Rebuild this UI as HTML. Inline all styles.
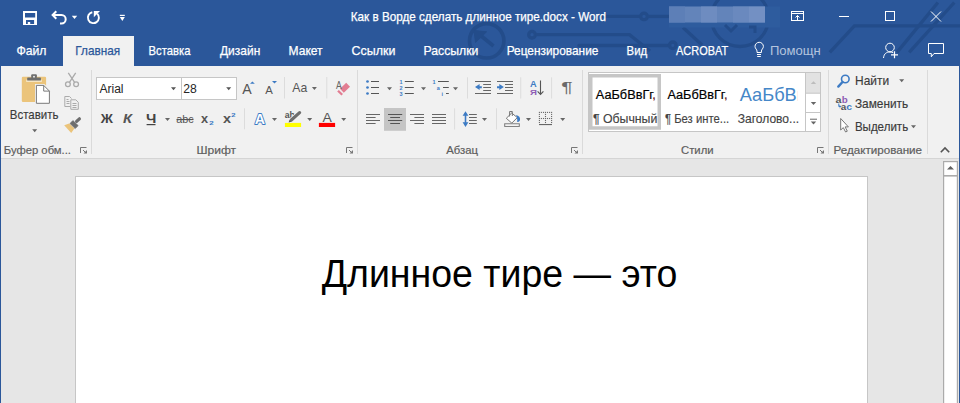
<!DOCTYPE html>
<html><head><meta charset="utf-8"><style>
html,body{margin:0;padding:0;width:960px;height:403px;overflow:hidden;background:#E6E6E6;}
svg{display:block;}
</style></head><body>
<svg width="960" height="403" viewBox="0 0 960 403">
<rect x="0" y="0" width="960" height="66" fill="#2B579A"/>
<g stroke="#234C8A" stroke-width="3.3" fill="none" stroke-linecap="butt">
<circle cx="486.7" cy="40.8" r="17.2" stroke-width="3.6"/>
<path d="M493.5 46 L480 35" stroke-width="3.6"/>
<path d="M474 30.5 L486.5 31.8 L475.5 42.5 Z" fill="#234C8A" stroke-width="1" stroke-linejoin="round"/>
<circle cx="532" cy="34.7" r="3.3"/>
<path d="M535.3 34.7 H629.5 L650 51"/>
<path d="M579 45.5 H669.5" stroke-linecap="round"/>
<circle cx="672.8" cy="45.3" r="3.3"/>
<path d="M600 16.4 H640.7"/><circle cx="644" cy="16.4" r="3.3"/><path d="M647.3 16.4 H670"/>
<circle cx="740" cy="18" r="28.5"/>
<path d="M683 27.5 L702 45"/>
<path d="M829.8 52.4 L854.4 25.9 H960"/>
<path d="M897 52.4 L937.9 2.5 M909.2 52.4 L954.3 2.5"/>
</g>
<rect x="669" y="6.5" width="111" height="21" fill="#2E5C9E"/>
<rect x="669" y="6.5" width="96" height="16" fill="#6384BA"/>
<rect x="669" y="6.5" width="16" height="16" fill="#5D7FB7"/><rect x="701" y="6.5" width="16" height="16" fill="#6E8CC0"/><rect x="733" y="6.5" width="16" height="16" fill="#6A89BE"/><rect x="749" y="6.5" width="16" height="16" fill="#7390C3"/>
<path d="M725 25 L731 31 L737 25 M749 27 H755 V33" fill="none" stroke="#234C8A" stroke-width="3"/>
<g fill="none" stroke="#FFFFFF">
<path d="M53 15 H61.5 A4.2 4.2 0 0 1 61.5 23.4 H60" stroke-width="2"/>
<path d="M56.3 11.3 L52.6 15 L56.3 18.7" stroke-width="2"/>
<path d="M92.3 12.2 A5.5 5.5 0 1 0 97.2 13.6" stroke-width="1.9"/>
</g>
<g fill="#FFFFFF">
<path d="M23 11 H37 V25 H23 Z M25 13 V17.6 H35.2 V13 Z M26 20 V24 H27.8 V22 H30.2 V24 H34.1 V20 Z" fill-rule="evenodd"/>
<path d="M71.8 15.8 H77.2 L74.5 18.9 Z"/>
<path d="M93.8 11 H100 L93.8 17.2 Z"/>
<rect x="119.8" y="14.8" width="5" height="1.2"/>
<path d="M119.8 17 H124.8 L122.3 21 Z"/>
</g>
<g fill="none" stroke="#FFFFFF" stroke-width="1">
<rect x="791.5" y="11.5" width="12" height="9"/>
<path d="M791.5 13.5 H803.5 M797.5 20.5 V15.5 M795.5 17.5 L797.5 15.5 L799.5 17.5"/>
<path d="M839 16.5 H849"/>
<rect x="885.5" y="11.5" width="9" height="9"/>
<path d="M931 11.5 L941 21.5 M941 11.5 L931 21.5"/>
</g>
<g fill="none" stroke="#FFFFFF" stroke-width="1">
<path d="M757 54.5 H761 M757.2 56.5 H760.8" stroke="#fff"/>
<path d="M757 52.5 V51 C757 49.5 755 48.5 755 46.5 A4.2 4.2 0 0 1 763.4 46.5 C763.4 48.5 761.4 49.5 761.4 51 V52.5 Z"/>
<circle cx="890" cy="47.5" r="4.3"/>
<path d="M883.5 58 C884 53.5 886.5 52 890 52 C891.5 52 892.5 52.3 893.2 52.7"/>
<path d="M891 54.8 H898 M894.5 51.3 V58.3" stroke-width="1.2"/>
<path d="M928.5 43.5 H943.5 V53.5 H934 L931.3 56.8 V53.5 H928.5 Z"/>
</g>
<rect x="63" y="36" width="71" height="30" fill="#F1F1F1"/>
<rect x="1" y="66" width="958" height="92" fill="#F1F1F1"/>
<rect x="1" y="158" width="958" height="1" fill="#D5D5D5"/>
<rect x="0" y="159" width="960" height="244" fill="#E6E6E6"/>
<rect x="0" y="66" width="1" height="337" fill="#2B579A"/>
<rect x="959" y="66" width="1" height="337" fill="#2B579A"/>
<rect x="91.0" y="70" width="1" height="84" fill="#DADADA"/>
<rect x="357.0" y="70" width="1" height="84" fill="#DADADA"/>
<rect x="582.0" y="70" width="1" height="84" fill="#DADADA"/>
<rect x="828.0" y="70" width="1" height="84" fill="#DADADA"/>
<rect x="927.0" y="70" width="1" height="84" fill="#DADADA"/>
<g fill="none" stroke="#777" stroke-width="1"><path d="M80.5 153 V147.5 H86.5"/><path d="M83 150 L86 153"/></g><path d="M83.5 153.5 H87 V150 Z" fill="#777"/>
<g fill="none" stroke="#777" stroke-width="1"><path d="M346.5 153 V147.5 H352.5"/><path d="M349 150 L352 153"/></g><path d="M349.5 153.5 H353 V150 Z" fill="#777"/>
<g fill="none" stroke="#777" stroke-width="1"><path d="M571.5 153 V147.5 H577.5"/><path d="M574 150 L577 153"/></g><path d="M574.5 153.5 H578 V150 Z" fill="#777"/>
<g fill="none" stroke="#777" stroke-width="1"><path d="M817.5 153 V147.5 H823.5"/><path d="M820 150 L823 153"/></g><path d="M820.5 153.5 H824 V150 Z" fill="#777"/>
<path d="M940.8 152.3 L945 148 L949.2 152.3" fill="none" stroke="#555" stroke-width="1.6"/>
<rect x="21.8" y="76.8" width="24.3" height="25.1" rx="1.2" fill="#EBC47B"/>
<rect x="26.2" y="79.6" width="15.7" height="2.4" fill="#F5E5C2"/>
<rect x="27.2" y="77.4" width="13.7" height="3.2" rx="0.6" fill="#6E6E6E"/>
<rect x="31.2" y="74.2" width="5.7" height="4" rx="1" fill="#6E6E6E"/>
<rect x="33.1" y="75.9" width="1.8" height="1.6" fill="#E8E8E8"/>
<path d="M35 84 H44.3 L50.8 90.5 V104.8 H35 Z" fill="#F1F1F1"/>
<path d="M36.4 85.4 H43.7 L49.4 91.1 V103.3 H36.4 Z" fill="#fff" stroke="#7A7A7A" stroke-width="1"/>
<path d="M43.7 85.4 V91.1 H49.4" fill="none" stroke="#7A7A7A" stroke-width="1"/>
<path d="M32.2 129.2 H37.2 L34.7 132.2 Z" fill="#666"/>
<g fill="none" stroke="#ABABAB" stroke-width="1.3">
<path d="M68.3 72.8 L74.6 82.3 M75.7 72.8 L69.4 82.3"/>
<circle cx="67.9" cy="84.2" r="2.4"/><circle cx="76.1" cy="84.2" r="2.4"/></g>
<g fill="none" stroke="#ABABAB" stroke-width="1">
<path d="M70.3 106.5 H64.8 V96.5 H69.5 L71.5 98.5"/>
<path d="M66.5 99.5 H68.5 M66.5 101.5 H69.5 M66.5 103.5 H69.5"/>
<path d="M70.8 99.8 H75.8 L78.3 102.3 V109.3 H70.8 Z" fill="#F1F1F1"/>
<path d="M72.5 103.5 H76.5 M72.5 105.5 H76.5 M72.5 107.5 H76.5"/></g>
<path d="M76.6 121.4 L79.4 118.8" stroke="#6E6E6E" stroke-width="3.2" stroke-linecap="round"/>
<path d="M72.9 120.6 L78.1 125.6 L75.2 128.6 L70 123.6 Z" fill="#6E6E6E" stroke="#6E6E6E" stroke-width="0.8" stroke-linejoin="round"/>
<path d="M64.2 125.2 L69.2 123.4 L74.4 128.6 L71.2 133 Z" fill="#EBC47B"/>
<rect x="96.5" y="77.5" width="140" height="22" fill="#fff" stroke="#C6C6C6"/>
<path d="M181.5 77.5 V99.5" stroke="#C6C6C6"/>
<path d="M171 87.3 H176 L173.5 90.3 Z" fill="#555"/>
<path d="M226.2 87.3 H231.2 L228.7 90.3 Z" fill="#555"/>
<path d="M250 83.7 L252.4 81.4 L254.8 83.7 Z" fill="#3D7BC4"/><path d="M272 81 H277 L274.5 83.6 Z" fill="#3D7BC4"/>
<rect x="284" y="77" width="1" height="21.5" fill="#DCDCDC"/><rect x="326.3" y="77" width="1" height="21.5" fill="#DCDCDC"/>
<path d="M311.9 86.9 H316.9 L314.4 89.9 Z" fill="#666"/>
<path d="M340 88.8 L346.2 82.8 L350 86.8 L343.8 92.8 Z" fill="#E27D92"/><path d="M337.2 91.5 L338.8 90 L343 94 L341.4 95.6 Z" fill="#E27D92"/>
<path d="M165 118 H170 L167.5 121 Z" fill="#666"/>
<rect x="146.6" y="124" width="8.9" height="1.2" fill="#444"/>
<rect x="176.5" y="119" width="17" height="1.1" fill="#555"/>
<rect x="244" y="108.3" width="1" height="21" fill="#DCDCDC"/>
<path d="M272 118 H277 L274.5 121 Z" fill="#666"/>
<path d="M307.2 118 H312.2 L309.7 121 Z" fill="#666"/>
<path d="M341.2 118 H346.2 L343.7 121 Z" fill="#666"/>
<rect x="284.9" y="122.9" width="16.2" height="4.1" fill="#FFFF00"/>
<rect x="318.9" y="122.9" width="16.2" height="4.1" fill="#FF0000"/>
<circle cx="367.5" cy="81.5" r="1.35" fill="#3D7BC4"/><rect x="371" y="81.0" width="8" height="1" fill="#555"/>
<rect x="404.8" y="81.0" width="9" height="1" fill="#555"/>
<circle cx="367.5" cy="87.5" r="1.35" fill="#3D7BC4"/><rect x="371" y="87.0" width="8" height="1" fill="#555"/>
<rect x="404.8" y="87.0" width="9" height="1" fill="#555"/>
<circle cx="367.5" cy="93.5" r="1.35" fill="#3D7BC4"/><rect x="371" y="93.0" width="8" height="1" fill="#555"/>
<rect x="404.8" y="93.0" width="9" height="1" fill="#555"/>
<path d="M387 87.2 H392 L389.5 90.2 Z" fill="#666"/>
<path d="M421 87.2 H426 L423.5 90.2 Z" fill="#666"/>
<path d="M453 87.2 H458 L455.5 90.2 Z" fill="#666"/>
<g font-family="Liberation Sans" font-weight="bold" font-size="5.5" fill="#3D7BC4"><text x="399.6" y="83.6">1</text><text x="399.6" y="89.6">2</text><text x="399.6" y="95.6">3</text><text x="432.6" y="83.6">1</text><text x="436.8" y="89.6">a</text><text x="441.4" y="95.6">i</text></g>
<rect x="438" y="81" width="10.8" height="1" fill="#555"/><rect x="443" y="87" width="5.8" height="1" fill="#555"/><rect x="446" y="93" width="2.8" height="1" fill="#555"/>
<rect x="467" y="77.3" width="1" height="21.2" fill="#DCDCDC"/><rect x="520.2" y="77.3" width="1" height="21.2" fill="#DCDCDC"/><rect x="551.1" y="77.3" width="1" height="21.2" fill="#DCDCDC"/>
<rect x="475" y="81" width="16" height="1" fill="#666"/><rect x="475" y="93" width="16" height="1" fill="#666"/>
<rect x="483.2" y="84" width="7.800000000000011" height="1" fill="#666"/>
<rect x="483.2" y="87" width="7.800000000000011" height="1" fill="#666"/>
<rect x="483.2" y="90" width="7.800000000000011" height="1" fill="#666"/>
<rect x="497" y="81" width="16" height="1" fill="#666"/><rect x="497" y="93" width="16" height="1" fill="#666"/>
<rect x="505" y="84" width="8" height="1" fill="#666"/>
<rect x="505" y="87" width="8" height="1" fill="#666"/>
<rect x="505" y="90" width="8" height="1" fill="#666"/>
<path d="M475 87 L479.6 84.1 V86.2 H481.8 V88.3 H479.6 V89.9 Z" fill="#3D7BC4"/>
<path d="M503.9 87 L499.3 84.1 V86.2 H497 V88.3 H499.3 V89.9 Z" fill="#3D7BC4"/>
<path d="M540.5 80.5 V94.2 M537.6 91.3 L540.5 94.4 L543.4 91.3" fill="none" stroke="#555" stroke-width="1.1"/>
<rect x="384" y="108" width="22" height="22.8" fill="#C5C5C5"/>
<rect x="366" y="114" width="14" height="1" fill="#666"/>
<rect x="388" y="114" width="14.2" height="1" fill="#555"/>
<rect x="410" y="114" width="14" height="1" fill="#666"/>
<rect x="432" y="114" width="14" height="1" fill="#666"/>
<rect x="366" y="117" width="9.6" height="1" fill="#666"/>
<rect x="390.2" y="117" width="9.8" height="1" fill="#555"/>
<rect x="414.4" y="117" width="9.6" height="1" fill="#666"/>
<rect x="432" y="117" width="14" height="1" fill="#666"/>
<rect x="366" y="120" width="14" height="1" fill="#666"/>
<rect x="388" y="120" width="14.2" height="1" fill="#555"/>
<rect x="410" y="120" width="14" height="1" fill="#666"/>
<rect x="432" y="120" width="14" height="1" fill="#666"/>
<rect x="366" y="123" width="9.6" height="1" fill="#666"/>
<rect x="390.2" y="123" width="9.8" height="1" fill="#555"/>
<rect x="414.4" y="123" width="9.6" height="1" fill="#666"/>
<rect x="432" y="123" width="14" height="1" fill="#666"/>
<rect x="454.1" y="108.3" width="1" height="21.2" fill="#DCDCDC"/><rect x="496" y="108.3" width="1" height="21.2" fill="#DCDCDC"/>
<path d="M465.5 113.5 V124.5" stroke="#3D7BC4" stroke-width="1.6"/><path d="M462.6 115.8 L465.5 111.2 L468.4 115.8 Z M462.6 122.3 L465.5 126.9 L468.4 122.3 Z" fill="#3D7BC4"/>
<rect x="469" y="114" width="7.8" height="1" fill="#666"/>
<rect x="469" y="117" width="7.8" height="1" fill="#666"/>
<rect x="469" y="120" width="7.8" height="1" fill="#666"/>
<rect x="469" y="123" width="7.8" height="1" fill="#666"/>
<path d="M482 118 H487 L484.5 121 Z" fill="#666"/>
<path d="M526 118 H531 L528.5 121 Z" fill="#666"/>
<path d="M560.2 118 H565.2 L562.7 121 Z" fill="#666"/>
<path d="M506.3 118.3 L511.7 113 L517.3 117.6 L511.8 123.1 Z" fill="#fff" stroke="#777" stroke-width="1"/>
<path d="M509.6 116.5 V111.5 H512.3 V116" fill="none" stroke="#777" stroke-width="1"/>
<path d="M516 115 C519 115.5 520.5 117.5 520 120 C519.7 121.5 518.5 122 517.2 122 C517.5 119.5 517 117 516 115 Z" fill="#3D7BC4"/>
<rect x="504.7" y="123.8" width="14.6" height="2.6" fill="#fff" stroke="#777" stroke-width="1"/>
<rect x="538.85" y="111.85000000000001" width="1.1" height="1.1" fill="#666"/>
<rect x="540.85" y="111.85000000000001" width="1.1" height="1.1" fill="#666"/>
<rect x="542.95" y="111.85000000000001" width="1.1" height="1.1" fill="#666"/>
<rect x="544.95" y="111.85000000000001" width="1.1" height="1.1" fill="#666"/>
<rect x="546.95" y="111.85000000000001" width="1.1" height="1.1" fill="#666"/>
<rect x="549.0500000000001" y="111.85000000000001" width="1.1" height="1.1" fill="#666"/>
<rect x="551.0500000000001" y="111.85000000000001" width="1.1" height="1.1" fill="#666"/>
<rect x="538.85" y="113.85000000000001" width="1.1" height="1.1" fill="#666"/>
<rect x="544.95" y="113.85000000000001" width="1.1" height="1.1" fill="#666"/>
<rect x="551.0500000000001" y="113.85000000000001" width="1.1" height="1.1" fill="#666"/>
<rect x="538.85" y="115.95" width="1.1" height="1.1" fill="#666"/>
<rect x="544.95" y="115.95" width="1.1" height="1.1" fill="#666"/>
<rect x="551.0500000000001" y="115.95" width="1.1" height="1.1" fill="#666"/>
<rect x="538.85" y="117.95" width="1.1" height="1.1" fill="#666"/>
<rect x="540.85" y="117.95" width="1.1" height="1.1" fill="#666"/>
<rect x="542.95" y="117.95" width="1.1" height="1.1" fill="#666"/>
<rect x="544.95" y="117.95" width="1.1" height="1.1" fill="#666"/>
<rect x="546.95" y="117.95" width="1.1" height="1.1" fill="#666"/>
<rect x="549.0500000000001" y="117.95" width="1.1" height="1.1" fill="#666"/>
<rect x="551.0500000000001" y="117.95" width="1.1" height="1.1" fill="#666"/>
<rect x="538.85" y="119.95" width="1.1" height="1.1" fill="#666"/>
<rect x="544.95" y="119.95" width="1.1" height="1.1" fill="#666"/>
<rect x="551.0500000000001" y="119.95" width="1.1" height="1.1" fill="#666"/>
<rect x="538.85" y="121.95" width="1.1" height="1.1" fill="#666"/>
<rect x="544.95" y="121.95" width="1.1" height="1.1" fill="#666"/>
<rect x="551.0500000000001" y="121.95" width="1.1" height="1.1" fill="#666"/>
<rect x="539" y="124" width="13" height="1.1" fill="#666"/>
<rect x="588.5" y="72.5" width="232" height="59" fill="#fff" stroke="#C6C6C6"/>
<rect x="590.75" y="75.75" width="68.5" height="52.25" fill="none" stroke="#C6C6C6" stroke-width="3.5"/>
<rect x="806" y="73" width="14" height="20.2" fill="#E2E2E2"/>
<path d="M805.5 72.5 V131.5 M806 93.2 H820.5 M806 112.5 H820.5" stroke="#C6C6C6" fill="none"/>
<path d="M810.8 84.1 L813.5 81.3 L816.2 84.1 Z" fill="#BDBDBD"/>
<path d="M810.8 102 H816.2 L813.5 104.9 Z" fill="#666"/>
<rect x="810" y="118.7" width="7" height="1" fill="#666"/><path d="M810.8 121.5 H816.2 L813.5 124.5 Z" fill="#666"/>
<circle cx="845.3" cy="79" r="3.8" fill="none" stroke="#3D7BC4" stroke-width="1.6"/><path d="M842.5 82 L838.3 86.6" stroke="#3D7BC4" stroke-width="2.4" stroke-linecap="round"/>
<path d="M899.2 79.3 H904.2 L901.7 82.3 Z" fill="#666"/>
<g font-family="Liberation Sans" font-size="9.5" font-weight="bold"><text x="835.5" y="102.8" fill="#555" textLength="6" lengthAdjust="spacingAndGlyphs">a</text><text x="841.8" y="102.8" fill="#8E5CB5" textLength="6" lengthAdjust="spacingAndGlyphs">b</text><text x="840.7" y="109.6" fill="#555" textLength="5.5" lengthAdjust="spacingAndGlyphs">a</text><text x="846.2" y="109.6" fill="#3D7BC4" textLength="5.8" lengthAdjust="spacingAndGlyphs">c</text></g>
<path d="M838.8 103.5 V106.5 H840.8 M839.6 105.3 L840.8 106.5 L839.6 107.7" fill="none" stroke="#3D7BC4" stroke-width="1"/>
<path d="M840.7 118.5 V130 L843.3 127.6 L845.6 132 L847.3 131.2 L845.1 126.9 H848.4 Z" fill="#fff" stroke="#777" stroke-width="1" stroke-linejoin="round"/>
<path d="M911 125.2 H916 L913.5 128.2 Z" fill="#666"/>
<rect x="75.5" y="176.5" width="792" height="240" fill="#fff" stroke="#C6C6C6" stroke-width="1"/>
<rect x="943.6" y="161.6" width="13.8" height="250" fill="#fff" stroke="#ABABAB" stroke-width="1.2"/>
<rect x="943.6" y="175" width="13.8" height="1.6" fill="#ABABAB"/>
<path d="M947 169.6 L950.5 166 L954 169.6Z" fill="#606060"/>
<g font-family="Liberation Sans">
<text x="350.76" y="20.6" font-size="12.6" textLength="255.19" lengthAdjust="spacingAndGlyphs" fill="#fff" font-weight="normal"  stroke="#fff" stroke-width="0.25">Как в Ворде сделать длинное тире.docx - Word</text>
<text x="16.39" y="54.5" font-size="12.6" textLength="30.14" lengthAdjust="spacingAndGlyphs" fill="#fff" font-weight="normal"  stroke="#fff" stroke-width="0.25">Файл</text>
<text x="75.36" y="54.5" font-size="12.6" textLength="44.76" lengthAdjust="spacingAndGlyphs" fill="#2B579A" font-weight="normal"  stroke="#2B579A" stroke-width="0.25">Главная</text>
<text x="148.6" y="54.5" font-size="12.6" textLength="41.86" lengthAdjust="spacingAndGlyphs" fill="#fff" font-weight="normal"  stroke="#fff" stroke-width="0.25">Вставка</text>
<text x="220.0" y="54.5" font-size="12.6" textLength="40.25" lengthAdjust="spacingAndGlyphs" fill="#fff" font-weight="normal"  stroke="#fff" stroke-width="0.25">Дизайн</text>
<text x="288.54" y="54.5" font-size="12.6" textLength="34.06" lengthAdjust="spacingAndGlyphs" fill="#fff" font-weight="normal"  stroke="#fff" stroke-width="0.25">Макет</text>
<text x="351.58" y="54.5" font-size="12.6" textLength="43.77" lengthAdjust="spacingAndGlyphs" fill="#fff" font-weight="normal"  stroke="#fff" stroke-width="0.25">Ссылки</text>
<text x="423.52" y="54.5" font-size="12.6" textLength="54.92" lengthAdjust="spacingAndGlyphs" fill="#fff" font-weight="normal"  stroke="#fff" stroke-width="0.25">Рассылки</text>
<text x="506.65" y="54.5" font-size="12.6" textLength="91.78" lengthAdjust="spacingAndGlyphs" fill="#fff" font-weight="normal"  stroke="#fff" stroke-width="0.25">Рецензирование</text>
<text x="626.59" y="54.5" font-size="12.6" textLength="20.56" lengthAdjust="spacingAndGlyphs" fill="#fff" font-weight="normal"  stroke="#fff" stroke-width="0.25">Вид</text>
<text x="676.0" y="54.5" font-size="12.6" textLength="52.23" lengthAdjust="spacingAndGlyphs" fill="#fff" font-weight="normal"  stroke="#fff" stroke-width="0.25">ACROBAT</text>
<text x="769.96" y="54.5" font-size="12.6" textLength="50.86" lengthAdjust="spacingAndGlyphs" fill="#B4C4DE" font-weight="normal" >Помощн</text>
<text x="9.78" y="119" font-size="12.4" textLength="48.59" lengthAdjust="spacingAndGlyphs" fill="#3A3A3A" font-weight="normal"  stroke="#3A3A3A" stroke-width="0.15">Вставить</text>
<text x="3.8" y="154.2" font-size="11.59" textLength="67.19" lengthAdjust="spacingAndGlyphs" fill="#5E5E5E" font-weight="normal"  stroke="#5E5E5E" stroke-width="0.2">Буфер обм...</text>
<text x="99.4" y="93.1" font-size="12.61" textLength="24.15" lengthAdjust="spacingAndGlyphs" fill="#262626" font-weight="normal" >Arial</text>
<text x="183.14" y="93.1" font-size="12.61" textLength="13.55" lengthAdjust="spacingAndGlyphs" fill="#262626" font-weight="normal" >28</text>
<text x="196.44" y="154.2" font-size="11.59" textLength="39.66" lengthAdjust="spacingAndGlyphs" fill="#5E5E5E" font-weight="normal"  stroke="#5E5E5E" stroke-width="0.2">Шрифт</text>
<text x="446.3" y="154.2" font-size="11.59" textLength="31.76" lengthAdjust="spacingAndGlyphs" fill="#5E5E5E" font-weight="normal"  stroke="#5E5E5E" stroke-width="0.2">Абзац</text>
<text x="595.8" y="99.1" font-size="12.61" textLength="60.12" lengthAdjust="spacingAndGlyphs" fill="#000" font-weight="normal"  stroke="#000" stroke-width="0.2">АаБбВвГг<tspan fill="#8B1A1A">,</tspan></text>
<text x="592.93" y="122.8" font-size="12.46" textLength="64.41" lengthAdjust="spacingAndGlyphs" fill="#444" font-weight="normal"  stroke="#444" stroke-width="0.15">¶ Обычный</text>
<text x="667.4" y="99.1" font-size="12.61" textLength="60.12" lengthAdjust="spacingAndGlyphs" fill="#000" font-weight="normal"  stroke="#000" stroke-width="0.2">АаБбВвГг<tspan fill="#8B1A1A">,</tspan></text>
<text x="664.96" y="122.8" font-size="12.46" textLength="64.23" lengthAdjust="spacingAndGlyphs" fill="#444" font-weight="normal"  stroke="#444" stroke-width="0.15">¶ Без инте...</text>
<text x="737.64" y="122.8" font-size="12.46" textLength="61.52" lengthAdjust="spacingAndGlyphs" fill="#444" font-weight="normal"  stroke="#444" stroke-width="0.15">Заголово...</text>
<text x="681.04" y="154.2" font-size="11.59" textLength="32.54" lengthAdjust="spacingAndGlyphs" fill="#5E5E5E" font-weight="normal"  stroke="#5E5E5E" stroke-width="0.2">Стили</text>
<text x="855.05" y="85" font-size="13.04" textLength="34.02" lengthAdjust="spacingAndGlyphs" fill="#3A3A3A" font-weight="normal"  stroke="#3A3A3A" stroke-width="0.15">Найти</text>
<text x="854.94" y="108.3" font-size="12.03" textLength="53.24" lengthAdjust="spacingAndGlyphs" fill="#3A3A3A" font-weight="normal"  stroke="#3A3A3A" stroke-width="0.15">Заменить</text>
<text x="854.88" y="130.5" font-size="12.32" textLength="53.3" lengthAdjust="spacingAndGlyphs" fill="#3A3A3A" font-weight="normal"  stroke="#3A3A3A" stroke-width="0.15">Выделить</text>
<text x="833.47" y="154.2" font-size="11.59" textLength="88.55" lengthAdjust="spacingAndGlyphs" fill="#5E5E5E" font-weight="normal"  stroke="#5E5E5E" stroke-width="0.2">Редактирование</text>
<text x="321.7" y="286.7" font-size="38.4" textLength="355.65" lengthAdjust="spacingAndGlyphs" fill="#000" font-weight="normal" >Длинное тире — это</text>
<text x="242.2" y="94" font-size="14.06" textLength="9.46" lengthAdjust="spacingAndGlyphs" fill="#555" font-weight="normal" >A</text>
<text x="265.2" y="94" font-size="10.58" textLength="7.57" lengthAdjust="spacingAndGlyphs" fill="#555" font-weight="normal" >A</text>
<text x="292.3" y="91.5" font-size="12.32" textLength="14.95" lengthAdjust="spacingAndGlyphs" fill="#555" font-weight="normal" >Aa</text>
<text x="336.0" y="89" font-size="11.59" textLength="5.77" lengthAdjust="spacingAndGlyphs" fill="#666" font-weight="normal" >A</text>
<text x="176.17" y="122.7" font-size="11.5" textLength="17.45" lengthAdjust="spacingAndGlyphs" fill="#555" font-weight="normal" >abc</text>
<text x="322.6" y="122.3" font-size="13.04" textLength="9.36" lengthAdjust="spacingAndGlyphs" fill="#555" font-weight="normal" >A</text>
<text x="561.36" y="92" font-size="14.5" textLength="11.43" lengthAdjust="spacingAndGlyphs" fill="#6A6A6A" font-weight="normal" >¶</text>
<text x="100.88" y="122.7" font-size="12.4" textLength="12.13" lengthAdjust="spacingAndGlyphs" fill="#444" font-weight="bold" >Ж</text>
<text x="145.96" y="122.7" font-size="12.4" textLength="10.36" lengthAdjust="spacingAndGlyphs" fill="#444" font-weight="bold" >Ч</text>
<text x="201.0" y="122.7" font-size="12.5" textLength="7.08" lengthAdjust="spacingAndGlyphs" fill="#555" font-weight="bold" >x</text>
<text x="209.16" y="124.9" font-size="6" textLength="4.43" lengthAdjust="spacingAndGlyphs" fill="#3D7BC4" font-weight="bold" >2</text>
<text x="222.9" y="123" font-size="12.5" textLength="8.09" lengthAdjust="spacingAndGlyphs" fill="#555" font-weight="bold" >x</text>
<text x="231.37" y="117" font-size="6" textLength="4.31" lengthAdjust="spacingAndGlyphs" fill="#3D7BC4" font-weight="bold" >2</text>
<text x="122.91" y="122.7" font-size="12.4" textLength="9.05" lengthAdjust="spacingAndGlyphs" fill="#555" font-weight="bold" font-style="italic">К</text>
<text x="529.91" y="87" font-size="9.5" textLength="6.69" lengthAdjust="spacingAndGlyphs" fill="#3D7BC4" font-weight="bold" >A</text>
<text x="530.0" y="94.7" font-size="8" textLength="6.97" lengthAdjust="spacingAndGlyphs" fill="#8E5CB5" font-weight="bold" >Я</text>
<text x="284.73" y="117.6" font-size="9.6" textLength="10.13" lengthAdjust="spacingAndGlyphs" fill="#555" font-weight="bold" >ab</text>
<text x="254.7" y="123.9" font-size="15.5" textLength="10.25" lengthAdjust="spacingAndGlyphs" fill="#fff" font-weight="bold" stroke="#3D7BC4" stroke-width="2" paint-order="stroke" stroke-linejoin="round">A</text>
</g>
<path d="M291.6 119.8 L299.6 112.6" stroke="#F1F1F1" stroke-width="5" stroke-linecap="round"/><path d="M291.6 119.8 L299.6 112.6" stroke="#6E6E6E" stroke-width="3.2" stroke-linecap="round"/><path d="M288.6 122.6 L289.6 119.6 L292 121.6 Z" fill="#555"/>
<clipPath id="clh"><rect x="735" y="75" width="63" height="30"/></clipPath>
<g clip-path="url(#clh)" font-family="Liberation Sans"><text x="739.7" y="100.8" font-size="18.5" textLength="66.75" lengthAdjust="spacingAndGlyphs" fill="#4587C8" font-weight="normal" >АаБбВв</text></g>
</svg></body></html>
